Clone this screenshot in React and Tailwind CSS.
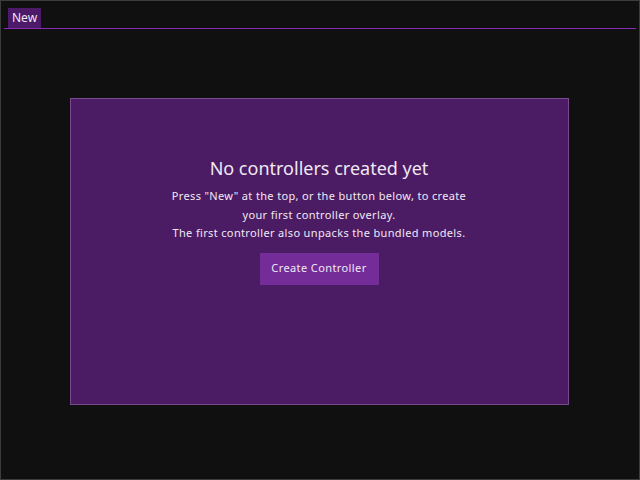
export default function App() {
  return (
    <div
      className="w-[640px] h-[480px] bg-[#101010] border border-[#3c3c3c] flex flex-col text-[#f0e8f4]"
      style={{ fontFamily: '"Noto Sans", "Open Sans", sans-serif' }}
    >
      {/* Tab bar */}
      <div className="pt-[7px] px-[3px]">
        <div className="flex pl-[4px] border-b border-[#8a2bb8]">
          <div className="h-[20px] px-[4px] bg-[#4d1a6a] text-[12px] leading-[20px]">New</div>
        </div>
      </div>

      {/* Empty state panel */}
      <div className="flex-1 flex items-start justify-center pt-[69px] pr-[2px]">
        <div className="w-[499px] h-[307px] bg-[#4b1b63] border border-[#7a4a90] flex flex-col items-center pt-[56px]">
          <h1 className="text-[18px] leading-[26px]">No controllers created yet</h1>
          <div className="mt-[6px] text-[11px] leading-[18.5px] tracking-[0.35px] text-center">
            <p>Press "New" at the top, or the button below, to create</p>
            <p>your first controller overlay.</p>
            <p>The first controller also unpacks the bundled models.</p>
          </div>
          <button className="mt-[10px] w-[119px] h-[32px] bg-[#732c98] text-[11px] tracking-[0.4px] text-[#f0e8f4]">
            Create Controller
          </button>
        </div>
      </div>
    </div>
  );
}
